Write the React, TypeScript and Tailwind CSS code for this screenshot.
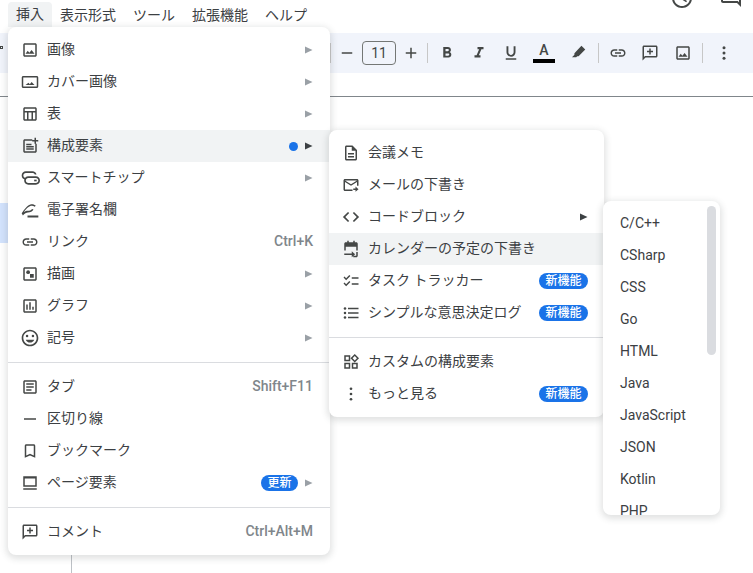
import type { ReactNode } from "react";

const font = { fontFamily: '"Roboto", "Noto Sans CJK JP", sans-serif' };

function Ic({ children, size = 18 }: { children: ReactNode; size?: number }) {
  return (
    <svg width={size} height={size} viewBox="0 0 24 24" fill="#444746" className="shrink-0">
      {children}
    </svg>
  );
}

const imagePath =
  "M19 5v14H5V5h14m0-2H5c-1.1 0-2 .9-2 2v14c0 1.1.9 2 2 2h14c1.1 0 2-.9 2-2V5c0-1.1-.9-2-2-2zm-4.86 8.86l-3 3.87L9 13.14 6 17h12l-3.86-5.14z";
const linkPath =
  "M3.9 12c0-1.71 1.39-3.1 3.1-3.1h4V7H7c-2.76 0-5 2.24-5 5s2.24 5 5 5h4v-1.9H7c-1.71 0-3.1-1.39-3.1-3.1zM8 13h8v-2H8v2zm9-6h-4v1.9h4c1.71 0 3.1 1.39 3.1 3.1s-1.39 3.1-3.1 3.1h-4V17h4c2.76 0 5-2.24 5-5s-2.24-5-5-5z";
const commentPath =
  "M2 4c0-1.1.9-2 2-2h16c1.1 0 2 .9 2 2v12c0 1.1-.9 2-2 2H6l-4 4V4zm2 0v13.17L5.17 16H20V4H4zM11 6h2v3h3v2h-3v3h-2v-3H8V9h3z";

const icons: Record<string, ReactNode> = {
  image: <Ic><path d={imagePath} /></Ic>,
  cover: (
    <Ic>
      <path d="M21 6v12H3V6h18m0-2H3c-1.1 0-2 .9-2 2v12c0 1.1.9 2 2 2h18c1.1 0 2-.9 2-2V6c0-1.1-.9-2-2-2zm-6.86 7.86l-2.4 3.1L10 12.9 6 16h12l-3.86-4.14z" />
    </Ic>
  ),
  table: (
    <Ic>
      <path d="M19 3H5c-1.1 0-2 .9-2 2v14c0 1.1.9 2 2 2h14c1.1 0 2-.9 2-2V5c0-1.1-.9-2-2-2zm0 2v3H5V5h14zM5 19v-9h3v9H5zm5 0v-9h4v9h-4zm6 0v-9h3v9h-3z" />
    </Ic>
  ),
  blocks: (
    <Ic>
      <path d="M15 3H5c-1.1 0-2 .9-2 2v14c0 1.1.9 2 2 2h14c1.1 0 2-.9 2-2V9h-2v10H5V5h10V3zM7 9h7v2H7V9zm0 3h10v2H7v-2zm0 3h10v2H7v-2zM18 1h2v3h3v2h-3v3h-2V6h-3V4h3V1z" />
    </Ic>
  ),
  chip: (
    <Ic size={20}>
      <path d="M7 4h8c2.4 0 4.3 1.6 4.8 3.7h-2.1C17.3 6.7 16.2 6 15 6H7C5.3 6 4 7.3 4 9s1.3 3 3 3v2c-2.8 0-5-2.2-5-5s2.2-5 5-5z" />
      <path d="M10 10h9c2.8 0 5 2.2 5 5s-2.2 5-5 5h-9c-2.8 0-5-2.2-5-5s2.2-5 5-5zm0 2c-1.7 0-3 1.3-3 3s1.3 3 3 3h9c1.7 0 3-1.3 3-3s-1.3-3-3-3h-9z" />
      <path d="M17 14h3v2h-3z" />
    </Ic>
  ),
  sign: (
    <Ic size={20}>
      <path d="M9 21h13v-2.500H9V21zM2 16C5 11.500 8.500 6.500 12.500 5.300c2.500-.7 5 .2 6.500 1.700l-1.500 1c-1.200-1-3-1.500-4.500-1C10 8 7 11 4.500 14.500c2-1 3.500-1.500 4.500-1.500 2.500 0 4.500-.7 5.500-2.300l1.700.8C15 14 12.500 15 9.500 15c-1.500 0-4.500 1.500-6 3.500L2 16z" />
    </Ic>
  ),
  link: <Ic><path d={linkPath} /></Ic>,
  draw: (
    <Ic>
      <path d="M19 3H5c-1.1 0-2 .9-2 2v14c0 1.1.9 2 2 2h14c1.1 0 2-.9 2-2V5c0-1.1-.9-2-2-2zm0 16H5V5h14v14z" />
      <circle cx="9.500" cy="9.500" r="2.500" />
      <path d="M12 12h5v5h-5z" />
    </Ic>
  ),
  chart: (
    <Ic>
      <path d="M19 3H5c-1.1 0-2 .9-2 2v14c0 1.1.9 2 2 2h14c1.1 0 2-.9 2-2V5c0-1.1-.9-2-2-2zm0 16H5V5h14v14zM7 10h2v7H7zm4-3h2v10h-2zm4 6h2v4h-2z" />
    </Ic>
  ),
  smile: (
    <Ic size={20}>
      <path d="M11.99 2C6.47 2 2 6.48 2 12s4.47 10 9.99 10C17.52 22 22 17.52 22 12S17.52 2 11.99 2zM12 20c-4.42 0-8-3.58-8-8s3.58-8 8-8 8 3.58 8 8-3.58 8-8 8z" />
      <circle cx="15.500" cy="9.500" r="1.500" />
      <circle cx="8.500" cy="9.500" r="1.500" />
      <path d="M12 17.500c2.33 0 4.31-1.46 5.11-3.5H6.89c.8 2.04 2.78 3.5 5.11 3.5z" />
    </Ic>
  ),
  tab: (
    <Ic>
      <path d="M19 5v14H5V5h14m0-2H5c-1.1 0-2 .9-2 2v14c0 1.1.9 2 2 2h14c1.1 0 2-.9 2-2V5c0-1.1-.9-2-2-2zM7 7h10v2H7V7zm0 4h10v2H7v-2zm0 4h7v2H7v-2z" />
    </Ic>
  ),
  hr: <Ic><path d="M4 11h16v2H4z" /></Ic>,
  bookmark: (
    <Ic>
      <path d="M17 3H7c-1.1 0-2 .9-2 2v16l7-3 7 3V5c0-1.1-.9-2-2-2zm0 15l-5-2.180L7 18V5h10v13z" />
    </Ic>
  ),
  page: (
    <Ic>
      <path d="M3 3h18v14H3V3zm2 3v9h14V6H5zM3 19h18v2H3z" />
    </Ic>
  ),
  comment: <Ic><path d={commentPath} /></Ic>,
  doc: (
    <Ic>
      <path d="M14 2H6c-1.1 0-1.990.9-1.990 2L4 20c0 1.1.89 2 1.990 2H18c1.1 0 2-.9 2-2V8l-6-6zM6 20V4h7v5h5v11H6zM8 12h8v2H8zm0 4h8v2H8z" />
    </Ic>
  ),
  mail: (
    <Ic>
      <path d="M2 6c0-1.1.9-2 2-2h16c1.1 0 2 .9 2 2v7h-2V8l-8 5-8-5v10h10v2H4c-1.1 0-2-.9-2-2V6zm2 0l8 5 8-5H4zM18 14l4 3.500-4 3.500v-2.500h-3v-2h3V14z" />
    </Ic>
  ),
  code: (
    <Ic>
      <path d="M9.600 17.200L4.400 12l5.200-5.200L8 5.200 1.200 12 8 18.800l1.600-1.600zm4.800 0l5.200-5.200-5.200-5.200L16 5.200l6.800 6.800-6.800 6.800-1.600-1.600z" />
    </Ic>
  ),
  event: (
    <Ic>
      <path d="M7 1h2v2h6V1h2v2h2c1.1 0 2 .9 2 2v9h-2V9H5v5H3V5c0-1.1.9-2 2-2h2V1zM3 18h10v-3l4.500 4-4.500 4v-3H3v-2zM19 16h2v5c0 1.1-.9 2-2 2h-4v-2h4v-5z" />
    </Ic>
  ),
  check: (
    <Ic>
      <path d="M22 7h-9v2h9V7zm0 8h-9v2h9v-2zM5.540 11L2 7.460l1.410-1.410 2.120 2.120 4.240-4.240 1.410 1.410L5.540 11zm0 8L2 15.460l1.410-1.410 2.120 2.120 4.240-4.240 1.410 1.410L5.540 19z" />
    </Ic>
  ),
  list: (
    <Ic>
      <circle cx="4" cy="6" r="1.700" />
      <circle cx="4" cy="12" r="1.700" />
      <circle cx="4" cy="18" r="1.700" />
      <path d="M8 5h14v2H8zM8 11h14v2H8zM8 17h14v2H8z" />
    </Ic>
  ),
  widgets: (
    <Ic>
      <path d="M3 3h8v8H3V3zm2 2v4h4V5H5zM3 13h8v8H3v-8zm2 2v4h4v-4H5zM13 13h8v8h-8v-8zm2 2v4h4v-4h-4zM17 1.300L22.700 7 17 12.700 11.300 7 17 1.300zm0 2.800L14.100 7l2.900 2.900L19.900 7 17 4.100z" />
    </Ic>
  ),
  more: (
    <Ic>
      <circle cx="12" cy="5" r="1.800" />
      <circle cx="12" cy="12" r="1.800" />
      <circle cx="12" cy="19" r="1.800" />
    </Ic>
  ),
};

function Arrow({ dark }: { dark?: boolean }) {
  return (
    <svg width="8" height="8" viewBox="0 0 8 8" className="shrink-0">
      <path d="M0 .5L7.500 4 0 7.500z" fill={dark ? "#3c4043" : "#9aa0a6"} />
    </svg>
  );
}

function Badge({ label }: { label: string }) {
  return (
    <span className="flex h-4 items-center rounded-full bg-[#1a73e8] px-[6.5px] text-[12px] leading-none font-medium text-white">
      {label}
    </span>
  );
}

type Row = {
  icon: string;
  label: string;
  arrow?: boolean;
  dark?: boolean;
  active?: boolean;
  dot?: boolean;
  keys?: string;
  badge?: string;
};

function MenuRow({ row, main }: { row: Row; main?: boolean }) {
  return (
    <div
      className={`flex h-8 items-center pl-3 text-[14px] text-[#3c4043] ${main ? "pr-[17px]" : "pr-4"} ${
        row.active ? "bg-[#f1f3f4]" : ""
      }`}
    >
      <span className="flex w-5 shrink-0 justify-center">{icons[row.icon]}</span>
      <span className="ml-[7px] pb-[2px] whitespace-nowrap">{row.label}</span>
      <span className="ml-auto flex items-center gap-[7px]">
        {row.dot && <span className="size-[9px] rounded-full bg-[#1a73e8]" />}
        {row.badge && <Badge label={row.badge} />}
        {row.keys && <span className="pb-[2px] text-[14px] font-medium text-[#80868b]">{row.keys}</span>}
        {row.arrow && <Arrow dark={row.dark} />}
      </span>
    </div>
  );
}

const insertA: Row[] = [
  { icon: "image", label: "画像", arrow: true },
  { icon: "cover", label: "カバー画像", arrow: true },
  { icon: "table", label: "表", arrow: true },
  { icon: "blocks", label: "構成要素", arrow: true, dark: true, active: true, dot: true },
  { icon: "chip", label: "スマートチップ", arrow: true },
  { icon: "sign", label: "電子署名欄" },
  { icon: "link", label: "リンク", keys: "Ctrl+K" },
  { icon: "draw", label: "描画", arrow: true },
  { icon: "chart", label: "グラフ", arrow: true },
  { icon: "smile", label: "記号", arrow: true },
];
const insertB: Row[] = [
  { icon: "tab", label: "タブ", keys: "Shift+F11" },
  { icon: "hr", label: "区切り線" },
  { icon: "bookmark", label: "ブックマーク" },
  { icon: "page", label: "ページ要素", arrow: true, badge: "更新" },
];
const blocksA: Row[] = [
  { icon: "doc", label: "会議メモ" },
  { icon: "mail", label: "メールの下書き" },
  { icon: "code", label: "コードブロック", arrow: true, dark: true },
  { icon: "event", label: "カレンダーの予定の下書き", active: true },
  { icon: "check", label: "タスク トラッカー", badge: "新機能" },
  { icon: "list", label: "シンプルな意思決定ログ", badge: "新機能" },
];
const blocksB: Row[] = [
  { icon: "widgets", label: "カスタムの構成要素" },
  { icon: "more", label: "もっと見る", badge: "新機能" },
];
const langs = ["C/C++", "CSharp", "CSS", "Go", "HTML", "Java", "JavaScript", "JSON", "Kotlin", "PHP"];
const menuBar = ["表示形式", "ツール", "拡張機能", "ヘルプ"];

function Sep() {
  return <div className="my-2 h-px bg-[#dadce0]" />;
}

function ToolSep() {
  return <span className="block h-5 w-px bg-[#c7c7c7]" />;
}

function Toolbar() {
  return (
    <div className="mt-[6px] flex h-10 items-center justify-end bg-[#f1f4fb] pr-[13px]">
      <span className="mr-[4px]"><ToolSep /></span>
      <span className="mr-[3px] flex w-[24px] justify-center"><Ic size={18}><path d="M5 11h14v2H5z" /></Ic></span>
      <span className="mr-[3px] flex h-6 w-[34px] items-center justify-center rounded border border-[#747775] text-[14px] text-[#444746]">11</span>
      <span className="mr-[4px] flex w-[24px] justify-center">
        <Ic size={18}><path d="M11 5h2v6h6v2h-6v6h-2v-6H5v-2h6z" /></Ic>
      </span>
      <ToolSep />
      <span className="ml-[3px] flex w-[32px] justify-center">
        <Ic><path d="M15.600 10.790c.97-.67 1.650-1.770 1.650-2.790 0-2.260-1.750-4-4-4H7v14h7.040c2.090 0 3.710-1.700 3.710-3.790 0-1.520-.86-2.820-2.150-3.420zM10 6.500h3c.83 0 1.500.67 1.500 1.500s-.67 1.500-1.500 1.500h-3v-3zm3.500 9H10v-3h3.500c.83 0 1.500.67 1.500 1.500s-.67 1.500-1.500 1.500z" /></Ic>
      </span>
      <span className="flex w-[32px] justify-center">
        <Ic><path d="M10 4v3h2.210l-3.420 8H6v3h8v-3h-2.210l3.420-8H18V4z" /></Ic>
      </span>
      <span className="flex w-[32px] justify-center">
        <Ic><path d="M12 17c3.310 0 6-2.690 6-6V3h-2.500v8c0 1.930-1.570 3.500-3.500 3.500S8.500 12.930 8.500 11V3H6v8c0 3.310 2.690 6 6 6zm-7 2v2h14v-2H5z" /></Ic>
      </span>
      <span className="flex w-[34px] flex-col items-center">
        <span className="text-[14px] leading-[15px] font-medium text-[#444746]">A</span>
        <span className="mt-[1px] h-1 w-[22px] bg-black" />
      </span>
      <span className="flex w-[34px] justify-center">
        <Ic><path d="M16.560 2.300l5.140 5.140-7.300 7.300-1.200 1.200c-.6.6-1.500.7-2.200.3L9.500 17.500H4l3.300-3.300c-.4-.7-.3-1.600.3-2.200l1.200-1.200 7.760-8.500z" /></Ic>
      </span>
      <span className="ml-[3px]"><ToolSep /></span>
      <span className="ml-[3px] flex w-[32px] justify-center"><Ic><path d={linkPath} /></Ic></span>
      <span className="flex w-[32px] justify-center"><Ic><path d={commentPath} /></Ic></span>
      <span className="flex w-[33px] justify-center"><Ic><path d={imagePath} /></Ic></span>
      <span className="ml-[3px]"><ToolSep /></span>
      <span className="ml-[5px] flex w-[32px] justify-center">
        <Ic><circle cx="12" cy="5" r="2" /><circle cx="12" cy="12" r="2" /><circle cx="12" cy="19" r="2" /></Ic>
      </span>
    </div>
  );
}

export default function App() {
  return (
    <div style={font} className="relative h-[573px] w-[753px] overflow-hidden bg-white text-[#3c4043]">
      {/* page behind the menus */}
      <div className="flex h-[27px] items-start pl-2">
        <div className="flex h-[25px] w-[44px] translate-y-[2px] items-center justify-center rounded-t bg-[#f1f3f4] pb-[1px] text-[14px]">
          挿入
        </div>
        <div className="flex h-[29px] items-center gap-px text-[14px]">
          {menuBar.map((m) => (
            <span key={m} className="px-2 leading-none whitespace-nowrap">{m}</span>
          ))}
        </div>
      </div>
      <Toolbar />
      <div className="mt-[23px] h-px bg-[#80868b]" />

      <div className="absolute top-[203px] left-0 h-10 w-2 bg-[#d3e3fd]" />
      <div className="absolute top-[550px] left-[71px] h-[23px] w-px bg-[#bdc1c6]" />
      <svg width="4" height="6" viewBox="0 0 4 6" fill="#444746" className="absolute top-[45px] left-0">
        <path d="M0 1h3v3H0V1zm1 1v1h1V2H1z" />
      </svg>

      {/* top right icons, cut by the window edge */}
      <svg width="24" height="24" viewBox="0 0 24 24" fill="#444746" className="absolute top-[-14px] left-[670px]">
        <path d="M12 2C6.480 2 2 6.480 2 12s4.480 10 10 10 10-4.480 10-10S17.520 2 12 2zm0 18c-4.410 0-8-3.590-8-8s3.590-8 8-8 8 3.590 8 8-3.590 8-8 8zm.5-13H11v6l5.200 3.200.8-1.300-4.500-2.700V7z" />
      </svg>
      <svg width="24" height="24" viewBox="0 0 24 24" fill="#444746" className="absolute top-[-15px] left-[719px]">
        <path d="M22 4c0-1.100-.9-2-2-2H4c-1.100 0-2 .9-2 2v12c0 1.100.9 2 2 2h14l4 4V4zm-2 13.170L18.830 16H4V4h16v13.170z" />
      </svg>

      {/* insert menu */}
      <div className="absolute top-[27px] left-2 w-[322px] rounded-lg bg-white pt-[7px] pb-[7px] shadow-[0_2px_6px_2px_rgba(60,64,67,0.15)]">
        {insertA.map((r) => <MenuRow key={r.label} row={r} main />)}
        <Sep />
        {insertB.map((r) => <MenuRow key={r.label} row={r} main />)}
        <Sep />
        <MenuRow main row={{ icon: "comment", label: "コメント", keys: "Ctrl+Alt+M" }} />
      </div>

      {/* building blocks submenu */}
      <div className="absolute top-[130px] left-[329px] w-[275px] rounded-lg bg-white pt-[7px] pb-[7px] shadow-[0_2px_6px_2px_rgba(60,64,67,0.15)]">
        {blocksA.map((r) => <MenuRow key={r.label} row={r} />)}
        <Sep />
        {blocksB.map((r) => <MenuRow key={r.label} row={r} />)}
      </div>

      {/* code block languages, scrolled list */}
      <div className="absolute top-[201px] left-[603px] h-[314px] w-[117px] overflow-hidden rounded-lg bg-white pt-[6px] shadow-[0_2px_6px_2px_rgba(60,64,67,0.15)]">
        {langs.map((l) => (
          <div key={l} className="flex h-8 items-center pl-[17px] text-[14px] text-[#3c4043]">{l}</div>
        ))}
        <div className="absolute top-[5px] right-1 h-[149px] w-[9px] rounded-full bg-[#dadce0]" />
      </div>
    </div>
  );
}
